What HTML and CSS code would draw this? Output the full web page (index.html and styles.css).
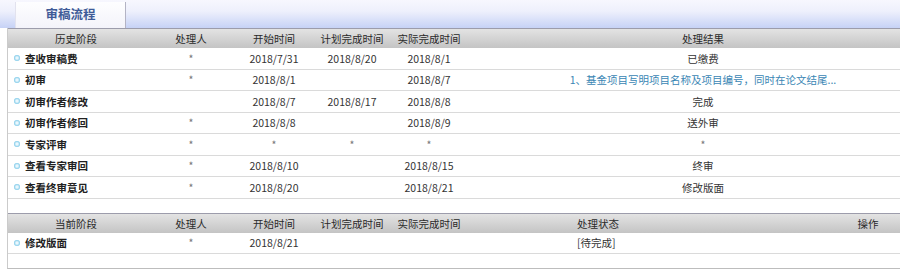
FILE: index.html
```html
<!DOCTYPE html>
<html lang="zh-CN">
<head>
<meta charset="utf-8">
<title>审稿流程</title>
<link rel="stylesheet" href="styles.css">
</head>
<body>
<div class="tabbar"><div class="tab">审稿流程</div></div>
<div class="panel">
  <div class="grid hdr">
    <div>历史阶段</div><div>处理人</div><div>开始时间</div><div>计划完成时间</div><div>实际完成时间</div><div class="res">处理结果</div>
  </div>
  <div class="grid row">
    <div class="name"><span class="dot"></span>查收审稿费</div><div class="star">*</div><div>2018/7/31</div><div>2018/8/20</div><div>2018/8/1</div><div class="res">已缴费</div>
  </div>
  <div class="grid row">
    <div class="name"><span class="dot"></span>初审</div><div class="star">*</div><div>2018/8/1</div><div></div><div>2018/8/7</div><div class="res blue">1、基金项目写明项目名称及项目编号，同时在论文结尾...</div>
  </div>
  <div class="grid row">
    <div class="name"><span class="dot"></span>初审作者修改</div><div></div><div>2018/8/7</div><div>2018/8/17</div><div>2018/8/8</div><div class="res">完成</div>
  </div>
  <div class="grid row">
    <div class="name"><span class="dot"></span>初审作者修回</div><div class="star">*</div><div>2018/8/8</div><div></div><div>2018/8/9</div><div class="res">送外审</div>
  </div>
  <div class="grid row">
    <div class="name"><span class="dot"></span>专家评审</div><div class="star">*</div><div class="star">*</div><div class="star">*</div><div class="star">*</div><div class="res star">*</div>
  </div>
  <div class="grid row">
    <div class="name"><span class="dot"></span>查看专家审回</div><div class="star">*</div><div>2018/8/10</div><div></div><div>2018/8/15</div><div class="res">终审</div>
  </div>
  <div class="grid row">
    <div class="name"><span class="dot"></span>查看终审意见</div><div class="star">*</div><div>2018/8/20</div><div></div><div>2018/8/21</div><div class="res">修改版面</div>
  </div>
  <div class="spacer"></div>
  <div class="grid2 hdr">
    <div>当前阶段</div><div>处理人</div><div>开始时间</div><div>计划完成时间</div><div>实际完成时间</div><div class="state">处理状态</div><div>操作</div>
  </div>
  <div class="grid2 row">
    <div class="name"><span class="dot"></span>修改版面</div><div class="star">*</div><div>2018/8/21</div><div></div><div></div><div class="state">[待完成]</div><div></div>
  </div>
  <div class="spacer2"></div>
</div>
</body>
</html>
```
FILE: styles.css
```css
body {
  margin: 0;
  font-family: "Noto Sans CJK SC", "Noto Sans", sans-serif;
  font-size: 10.5px;
  color: #333;
  background: #fff;
  overflow: hidden;
}
.tabbar {
  height: 28px;
  background: linear-gradient(#f7f7fe, #eef0fc 40%, #c6d2f6);
  display: flex;
  align-items: flex-end;
  padding-left: 15px;
}
.tab {
  width: 111px;
  height: 26px;
  box-sizing: border-box;
  background: linear-gradient(#fefeff, #f3f3fa);
  border-left: 1px solid #e2e2ee;
  border-right: 1px solid #b3b3c4;
  text-align: center;
  font-size: 12.5px;
  font-weight: bold;
  color: #3f5b98;
  line-height: 24px;
}
.panel {
  margin-left: 7px;
  border-left: 1px solid #cbcbcb;
  border-bottom: 1px solid #bdbdbd;
}
.grid {
  display: grid;
  grid-template-columns: 136px 94px 72px 84px 70px 1fr;
  align-items: center;
  text-align: center;
  white-space: nowrap;
}
.grid2 {
  display: grid;
  grid-template-columns: 136px 94px 72px 84px 70px 1fr 64px;
  align-items: center;
  text-align: center;
  white-space: nowrap;
}
.hdr {
  height: 20px;
  box-sizing: border-box;
  border-top: 1px solid #9c9cab;
  background: linear-gradient(#e3e3e3, #c4c4c4);
  color: #2a2a2a;
}
.row {
  height: 21.5px;
  box-sizing: border-box;
  border-bottom: 1px solid #dadada;
}
.name {
  text-align: left;
  display: flex;
  align-items: center;
  padding-left: 6px;
  font-weight: bold;
  color: #222;
}
.dot {
  width: 6px;
  height: 6px;
  border-radius: 50%;
  background: radial-gradient(circle, #eaf7fd 25%, #70c4e6 75%);
  margin-right: 5px;
  flex: none;
}
.res {
  padding-left: 42px;
}
.blue {
  color: #3a86b4;
}
.star {
  color: #777;
}
.state {
  text-align: left;
  padding-left: 113px;
}
.spacer {
  height: 14px;
}
.spacer2 {
  height: 14px;
}
```
